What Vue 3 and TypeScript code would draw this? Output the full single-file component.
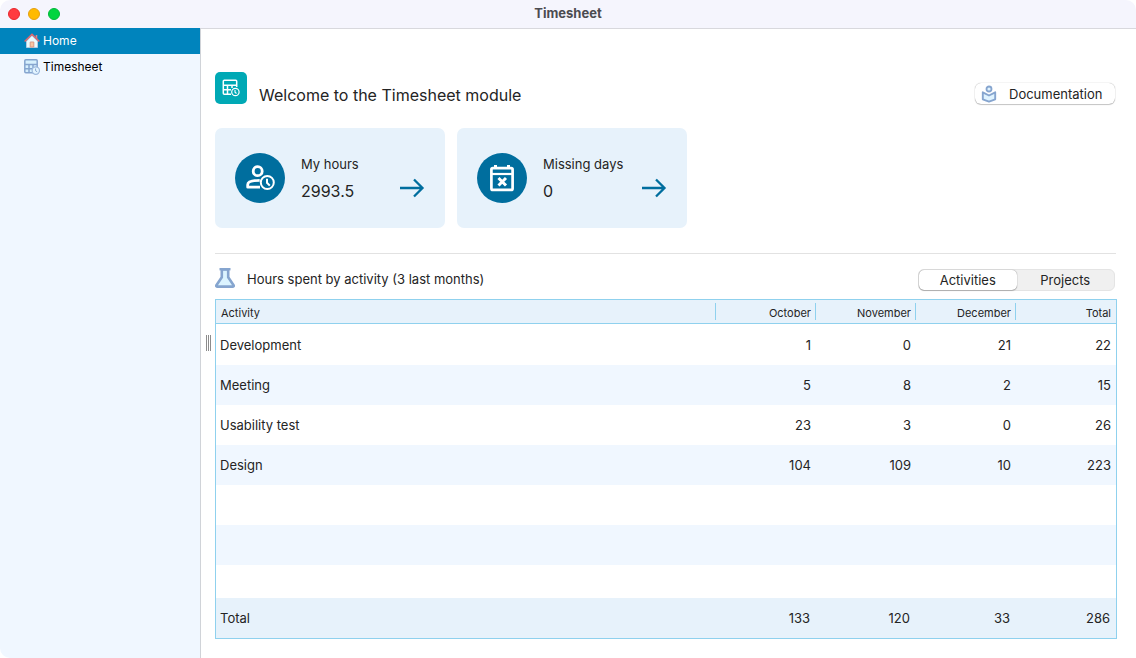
<script setup lang="ts">
import { computed, ref } from 'vue'

interface Row {
  name: string
  values: number[]
}

type Mode = 'activities' | 'projects'

const months = ['October', 'November', 'December', 'Total']

const rows: Row[] = [
  { name: 'Development', values: [1, 0, 21, 22] },
  { name: 'Meeting', values: [5, 8, 2, 15] },
  { name: 'Usability test', values: [23, 3, 0, 26] },
  { name: 'Design', values: [104, 109, 10, 223] },
]

const mode = ref<Mode>('activities')
const page = ref('home')

const totals = computed(() =>
  months.map((_, i) => rows.reduce((sum, row) => sum + row.values[i], 0)),
)
</script>

<template>
  <div class="window">
    <header class="titlebar">
      <div class="lights">
        <button class="light close" aria-label="Close"></button>
        <button class="light minimize" aria-label="Minimize"></button>
        <button class="light maximize" aria-label="Zoom"></button>
      </div>
      <h1 class="window-title">Timesheet</h1>
    </header>

    <div class="body">
      <nav class="sidebar" aria-label="Modules">
        <a href="#home" class="nav-item" :class="{ active: page === 'home' }" @click="page = 'home'">
          <svg width="16" height="16" viewBox="0 0 16 16" aria-hidden="true">
            <path d="M2.500 8v6.500h11V8L8 2.500z" fill="#e9fbff" stroke="#b3cbe0" />
            <path d="M12.500 2v4" stroke="#d9898b" stroke-width="1.500" />
            <path d="M.6 8.500 8 1.300l7.400 7.200" fill="none" stroke="#e2656b" stroke-width="1.600" />
            <path d="M6.200 14V9h3.600v5z" fill="#f8c6a2" stroke="#d99a85" />
          </svg>
          Home
        </a>
        <a href="#timesheet" class="nav-item" :class="{ active: page === 'timesheet' }" @click="page = 'timesheet'">
          <svg width="16" height="16" viewBox="0 0 16 16" aria-hidden="true">
            <rect x=".8" y=".8" width="12.400" height="13" rx="1" fill="#d7f0fd" stroke="#86a5cf" stroke-width="1.500" />
            <path d="M1 5.500h12M1 9.700h8M5 5.500v8M9 5.500v8" stroke="#86a5cf" stroke-width="1.500" />
            <circle cx="11.800" cy="11.600" r="3.700" fill="#e4f5ff" stroke="#9db9dc" stroke-width="1.200" />
            <path d="M11.600 9.500v2.300l1.600 1" fill="none" stroke="#86a5cf" />
          </svg>
          Timesheet
        </a>
      </nav>

      <div class="splitter" role="separator" aria-orientation="vertical"><span class="grip"></span></div>

      <main class="content">
        <section class="welcome">
          <div class="module-icon">
            <svg width="18" height="18" viewBox="0 0 18 18" fill="none" stroke="#fff" stroke-width="1.500" aria-hidden="true">
              <path d="M9 15.200H2.300a1 1 0 0 1-1-1V2.300a1 1 0 0 1 1-1h11.400a1 1 0 0 1 1 1V8M1 6.300h14M1 10.800h8M5.500 6.500v9M10 6.500V9" />
              <circle cx="13.400" cy="13" r="3.700" stroke-width="1.200" />
              <path d="M13 11v2.300l1.500 1.200" stroke-width="1.100" />
            </svg>
          </div>
          <h2 class="welcome-title">Welcome to the Timesheet module</h2>
          <button class="doc-button">
            <svg width="16" height="18" viewBox="0 0 16 18" aria-hidden="true">
              <path d="M1.800 7.300v7L8 16.600l6.200-2.300v-7L8 10.500z" fill="#dff3ff" stroke="#86a5cf" stroke-width="1.900" stroke-linejoin="round" />
              <circle cx="8" cy="4" r="2.500" fill="#dff3ff" stroke="#86a5cf" stroke-width="1.800" />
            </svg>
            <span>Documentation</span>
          </button>
        </section>

        <section class="cards">
          <button class="card">
            <span class="card-icon">
              <svg width="30" height="30" viewBox="0 0 30 30" fill="none" stroke="#fff" stroke-width="2.800" aria-hidden="true">
                <circle cx="12.700" cy="8.200" r="4.500" />
                <path d="M15 24.200H2.700v-2.500c0-2.800 5-4.300 12-4.400" stroke-linejoin="round" />
                <circle cx="22.300" cy="19.500" r="6.500" stroke-width="2" />
                <path d="M22 15.800v4l2.800 2.800" stroke-width="2" />
              </svg>
            </span>
            <span class="card-text">
              <span class="card-label">My hours</span>
              <span class="card-value">2993.5</span>
            </span>
            <svg class="arrow" width="26" height="20" viewBox="0 0 26 20" fill="none" stroke="#006e9e" stroke-width="2.300" aria-hidden="true">
              <path d="M1 10h22.500M15 1.500l8.500 8.500-8.500 8.500" />
            </svg>
          </button>
          <button class="card">
            <span class="card-icon">
              <svg width="30" height="30" viewBox="0 0 30 30" fill="none" stroke="#fff" stroke-width="2.700" aria-hidden="true">
                <rect x="4.400" y="5.200" width="21.200" height="21.700" rx="1.500" />
                <path d="M4 11h22" stroke-width="2.200" />
                <path d="M8.500 2v4M21.500 2v4" stroke-width="3" />
                <path d="m11.500 15 7.500 7.500m0-7.500-7.500 7.500" stroke-width="3" />
              </svg>
            </span>
            <span class="card-text">
              <span class="card-label">Missing days</span>
              <span class="card-value">0</span>
            </span>
            <svg class="arrow" width="26" height="20" viewBox="0 0 26 20" fill="none" stroke="#006e9e" stroke-width="2.300" aria-hidden="true">
              <path d="M1 10h22.500M15 1.500l8.500 8.500-8.500 8.500" />
            </svg>
          </button>
        </section>

        <section class="report">
          <div class="report-head">
            <svg width="20" height="20" viewBox="0 0 20 20" aria-hidden="true">
              <path d="M6.800 1.500v7.800L1.400 17.200q-.5 1.400 1 1.400h15.200q1.500 0 1-1.400L13.200 9.300V1.500z" fill="#dcf4ff" stroke="#86a5cf" stroke-width="2.600" stroke-linejoin="round" />
              <path d="M4.500 1.200h11" stroke="#86a5cf" stroke-width="2.400" />
            </svg>
            <h3 class="report-title">Hours spent by activity (3 last months)</h3>
            <div class="segmented" role="group" aria-label="Group by">
              <button :class="{ on: mode === 'activities' }" :aria-pressed="mode === 'activities'" @click="mode = 'activities'">Activities</button>
              <button :class="{ on: mode === 'projects' }" :aria-pressed="mode === 'projects'" @click="mode = 'projects'">Projects</button>
            </div>
          </div>

          <div class="grid">
            <table>
              <thead>
                <tr>
                  <th scope="col" class="name">Activity</th>
                  <th v-for="month in months" :key="month" scope="col">{{ month }}</th>
                </tr>
              </thead>
              <tbody>
                <tr v-for="row in rows" :key="row.name">
                  <td class="name">{{ row.name }}</td>
                  <td v-for="(value, i) in row.values" :key="i">{{ value }}</td>
                </tr>
                <tr><td colspan="5"></td></tr>
                <tr><td colspan="5"></td></tr>
                <tr class="rest"><td colspan="5"></td></tr>
              </tbody>
              <tfoot>
                <tr>
                  <td class="name">Total</td>
                  <td v-for="(value, i) in totals" :key="i">{{ value }}</td>
                </tr>
              </tfoot>
            </table>
          </div>
        </section>
      </main>
    </div>
  </div>
</template>

<style>
body {
  background: #fff;
}
</style>

<style scoped>
* {
  box-sizing: border-box;
}

.window {
  display: flex;
  flex-direction: column;
  height: 100vh;
  overflow: hidden;
  border-radius: 10px;
  background: #fff;
  color: #242424;
  font-family: Inter, "Liberation Sans", sans-serif;
  font-size: 13px;
  line-height: 16px;
}

h1,
h2,
h3 {
  margin: 0;
  font-weight: 400;
}

button {
  padding: 0;
  border: 0;
  background: none;
  color: inherit;
  font: inherit;
}

svg {
  flex: none;
}

.titlebar {
  display: grid;
  grid-template-columns: 1fr auto 1fr;
  align-items: center;
  flex: none;
  height: 28px;
  background: #f5f5fd;
}

.lights {
  display: flex;
  gap: 8px;
  padding-left: 8px;
}

.light {
  width: 12px;
  height: 12px;
  border: 1px solid;
  border-radius: 50%;
}

.close {
  background: #ff3b40;
  border-color: #e8272e;
}

.minimize {
  background: #ffba00;
  border-color: #e5a010;
}

.maximize {
  background: #00d53f;
  border-color: #00b83a;
}

.window-title {
  padding-bottom: 2px;
  color: #4b4b50;
  font-size: 13px;
  font-weight: 700;
}

.body {
  display: flex;
  flex: 1;
  min-height: 0;
}

.sidebar {
  flex: none;
  width: 201px;
  border-right: 1px solid #d0d3d8;
  background: #f0f7ff;
}

.nav-item {
  display: flex;
  align-items: center;
  gap: 3px;
  height: 26px;
  padding-left: 24px;
  color: #000;
  font-size: 12px;
  text-decoration: none;
}

.nav-item.active {
  background: #0084bd;
  color: #fff;
}

.splitter {
  display: flex;
  align-items: center;
  justify-content: center;
  flex: none;
  width: 14px;
  padding-bottom: 2px;
  border-top: 1px solid #d8d8dd;
}

.grip {
  width: 5px;
  height: 16px;
  border: solid #8c8c8c;
  border-width: 0 1px;
  background: linear-gradient(#8c8c8c, #8c8c8c) center / 1px 100% no-repeat;
}

.content {
  display: flex;
  flex-direction: column;
  flex: 1;
  min-width: 0;
  padding: 43px 19px 19px 0;
  border-top: 1px solid #d8d8dd;
}

.welcome {
  display: flex;
  align-items: flex-start;
  padding-right: 2px;
}

.module-icon {
  display: flex;
  align-items: center;
  justify-content: center;
  width: 32px;
  height: 32px;
  border-radius: 5px;
  background: #00a9b5;
}

.welcome-title {
  flex: 1;
  padding: 13px 0 0 12px;
  font-size: 16px;
  line-height: 20px;
}

.doc-button {
  display: flex;
  align-items: center;
  gap: 12px;
  width: 140px;
  height: 21px;
  margin-top: 11px;
  padding-left: 6px;
  border-radius: 6px;
  background: #fff;
  box-shadow: 0 0 1px #0006, 0 1px 1px #0003;
}

.cards {
  display: flex;
  gap: 12px;
  margin-top: 23px;
}

.card {
  display: flex;
  align-items: center;
  width: 230px;
  height: 100px;
  padding: 0 20px;
  border-radius: 7px;
  background: #e7f2fb;
  text-align: left;
}

.card-icon {
  display: flex;
  align-items: center;
  justify-content: center;
  width: 50px;
  height: 50px;
  border-radius: 50%;
  background: #006e9e;
}

.card-text {
  display: flex;
  flex: 1;
  flex-direction: column;
  gap: 9px;
  padding-left: 16px;
}

.card-value {
  font-size: 16px;
  line-height: 20px;
}

.arrow {
  margin-top: 20px;
}

.report {
  display: flex;
  flex: 1;
  flex-direction: column;
  min-height: 0;
  margin-top: 25px;
}

.report-head {
  display: flex;
  align-items: center;
  height: 46px;
  margin-right: 1px;
  padding-top: 3px;
  border-top: 1px solid #e2e2e2;
}

.report-title {
  flex: 1;
  padding: 2px 0 0 12px;
  font-size: 13px;
}

.segmented {
  display: flex;
  width: 197px;
  height: 22px;
  margin: 3px 1px 0 0;
  border: 1px solid #e4e4e4;
  border-radius: 6px;
  background: #f0f0f0;
}

.segmented button {
  flex: 1;
  border-radius: 5px;
}

.segmented .on {
  background: #fff;
  box-shadow: 0 0 1px #0008, 0 1px 1px #0003;
}

.grid {
  flex: 1;
  min-height: 0;
  border: 1px solid #8fd1ee;
}

table {
  width: 100%;
  height: 100%;
  border-collapse: separate;
  border-spacing: 0;
  table-layout: fixed;
}

th,
td {
  width: 100px;
  height: 40px;
  padding: 0 5px;
  text-align: right;
}

.name {
  width: auto;
  padding-left: 4px;
  text-align: left;
}

th {
  height: 24px;
  padding-top: 3px;
  border-bottom: 1px solid #8fd1ee;
  background: linear-gradient(#8fd1ee, #8fd1ee) right 3px / 1px 17px no-repeat #e7f2fb;
  font-size: 11px;
  font-weight: 400;
}

th:last-child {
  background: #e7f2fb;
}

th.name {
  padding-left: 5px;
}

tbody tr:first-child td {
  height: 41px;
}

tbody tr:nth-child(even) {
  background: #f0f7ff;
}

tbody .rest td {
  height: auto;
}

tfoot tr {
  background: #e7f2fb;
}

tfoot td {
  padding-right: 6px;
}
</style>
